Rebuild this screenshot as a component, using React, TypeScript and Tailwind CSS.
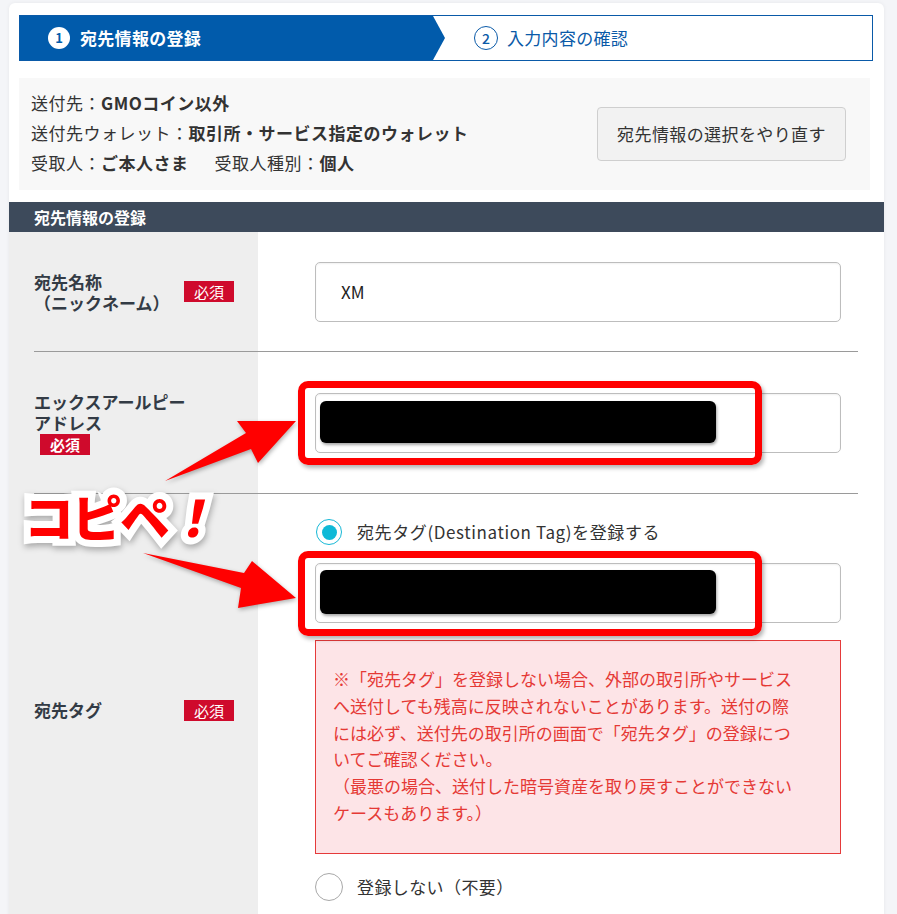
const font = '"Noto Sans CJK JP", "Noto Sans", sans-serif';

function Badge({ className = "" }: { className?: string }) {
  return (
    <span
      className={`inline-flex h-[21px] w-[50px] items-center justify-center bg-[#cf0a2c] text-[15px] leading-none text-white ${className}`}
    >
      必須
    </span>
  );
}

function Radio({ checked }: { checked?: boolean }) {
  if (checked) {
    return (
      <span className="flex h-[26px] w-[26px] shrink-0 items-center justify-center rounded-full border-[1.5px] border-[#16b8d6] bg-white">
        <span className="h-[15px] w-[15px] rounded-full bg-[#0fb9d7]" />
      </span>
    );
  }
  return <span className="h-[28px] w-[28px] shrink-0 rounded-full border-[1.5px] border-[#a8a8a8] bg-white" />;
}

function TextInput({ value }: { value?: string }) {
  return (
    <div className="flex h-[60px] w-[526px] items-center rounded-[5px] border border-[#bdbdbd] bg-white px-[25px] text-[17px] text-[#222] shadow-[inset_0_1px_2px_rgba(0,0,0,0.06)]">
      {value}
    </div>
  );
}

function Stepper() {
  return (
    <div className="mx-[10px] flex h-[46px] w-[854px] border border-[#0a5aa8] bg-white">
      <div className="flex h-full w-[425px] items-center gap-[10px] bg-[#015bab] pl-[28px] [clip-path:polygon(0_0,calc(100%-12px)_0,100%_50%,calc(100%-12px)_100%,0_100%)]">
        <span className="flex h-[22px] w-[22px] items-center justify-center rounded-full bg-white text-[13px] font-bold text-[#015bab]">
          1
        </span>
        <span className="text-[17px] font-bold tracking-[0.3px] text-white">宛先情報の登録</span>
      </div>
      <div className="flex items-center gap-[9px] pl-[29px]">
        <span className="flex h-[24px] w-[24px] items-center justify-center rounded-full border-[1.5px] border-[#0a5aa8] text-[14px] font-medium text-[#0a5aa8]">
          2
        </span>
        <span className="text-[17px] tracking-[0.3px] text-[#0a5aa8]">入力内容の確認</span>
      </div>
    </div>
  );
}

function Summary() {
  return (
    <div className="mx-[10px] mt-[17px] flex h-[112px] w-[851px] items-center justify-between bg-[#f8f8f8] pl-[12px] pr-[24px] text-[17px] leading-[30px] tracking-[0.5px] text-[#333]">
      <div className="-mt-[2px]">
        <div>
          送付先：<b className="font-bold">GMOコイン以外</b>
        </div>
        <div>
          送付先ウォレット：<b className="font-bold">取引所・サービス指定のウォレット</b>
        </div>
        <div className="flex gap-[26px]">
          <span>
            受取人：<b className="font-bold">ご本人さま</b>
          </span>
          <span>
            受取人種別：<b className="font-bold">個人</b>
          </span>
        </div>
      </div>
      <button className="h-[54px] w-[249px] rounded-[4px] border border-[#cfcfcf] bg-[#f2f2f2] text-[17px] tracking-[0.4px] text-[#333]">
        宛先情報の選択をやり直す
      </button>
    </div>
  );
}

function Form() {
  return (
    <div className="bg-[linear-gradient(90deg,#eeeeee_249px,#ffffff_249px)] pl-[25px] pr-[26px]">
      {/* 宛先名称 */}
      <div className="flex h-[120px] items-center border-b border-[#9a9a9a]">
        <div className="flex w-[224px] items-center">
          <div className="w-[150px] text-[17px] font-bold leading-[21px] text-[#333b45]">
            <div>宛先名称</div>
            <div>（ニックネーム）</div>
          </div>
          <Badge />
        </div>
        <div className="pl-[57px]">
          <TextInput value="XM" />
        </div>
      </div>
      {/* アドレス */}
      <div className="flex h-[142px] items-center border-b border-[#9a9a9a]">
        <div className="w-[224px] text-[17px] font-bold leading-[21px] text-[#333b45]">
          <div>エックスアールピー</div>
          <div>アドレス</div>
          <Badge className="ml-[6px]" />
        </div>
        <div className="pl-[57px]">
          <TextInput />
        </div>
      </div>
      {/* 宛先タグ */}
      <div className="flex items-center pb-[24px] pt-[25px]">
        <div className="flex w-[224px] items-center">
          <div className="w-[150px] text-[17px] font-bold text-[#333b45]">宛先タグ</div>
          <Badge />
        </div>
        <div className="pl-[57px]">
          <label className="flex h-[26px] items-center gap-[15px] pl-[1px] text-[17px] tracking-[0.6px] text-[#333]">
            <Radio checked />
            宛先タグ(Destination Tag)を登録する
          </label>
          <div className="mt-[18px]">
            <TextInput />
          </div>
          <div className="mt-[17px] h-[214px] w-[526px] border border-[#e53a3a] bg-[#fde4e7] pl-[17px] pt-[25px] text-[17px] leading-[26.8px] text-[#e53935]">
            <div className="whitespace-nowrap">※「宛先タグ」を登録しない場合、外部の取引所やサービス</div>
            <div className="whitespace-nowrap">へ送付しても残高に反映されないことがあります。送付の際</div>
            <div className="whitespace-nowrap">には必ず、送付先の取引所の画面で「宛先タグ」の登録につ</div>
            <div className="whitespace-nowrap">いてご確認ください。</div>
            <div className="whitespace-nowrap">（最悪の場合、送付した暗号資産を取り戻すことができない</div>
            <div className="whitespace-nowrap">ケースもあります。）</div>
          </div>
          <label className="mt-[19px] flex h-[28px] items-center gap-[14px] text-[17px] tracking-[0.4px] text-[#333]">
            <Radio />
            登録しない（不要）
          </label>
        </div>
      </div>
    </div>
  );
}

function Annotations() {
  return (
    <>
      {/* redaction boxes */}
      <div className="absolute left-[320px] top-[401px] h-[42px] w-[396px] rounded-[6px] bg-black shadow-[1px_2px_3px_rgba(0,0,0,0.35)]" />
      <div className="absolute left-[320px] top-[570px] h-[44px] w-[396px] rounded-[6px] bg-black shadow-[1px_2px_3px_rgba(0,0,0,0.35)]" />
      {/* red highlight frames */}
      <div className="absolute left-[298px] top-[381px] h-[84px] w-[464px] rounded-[10px] border-[7px] border-[#ff0000] shadow-[2px_3px_4px_rgba(0,0,0,0.3)]" />
      <div className="absolute left-[298px] top-[551px] h-[85px] w-[464px] rounded-[10px] border-[7px] border-[#ff0000] shadow-[2px_3px_4px_rgba(0,0,0,0.3)]" />
      {/* arrows */}
      <svg
        className="pointer-events-none absolute left-0 top-0 drop-shadow-[1px_2px_2px_rgba(0,0,0,0.3)]"
        width="897"
        height="914"
        viewBox="0 0 897 914"
      >
        <polygon points="165,481 246,433 237,421 296,421 258,463 251,449" fill="#ff0000" />
        <polygon points="143,553 244,573 252,561 296,598 238,608 241,588" fill="#ff0000" />
      </svg>
      {/* コピペ！ */}
      <div
        className="pointer-events-none absolute left-[24px] top-[484px] flex items-center text-[50px] font-black leading-[62px] tracking-[-2px] text-[#ff0000] [-webkit-text-stroke:14px_#ffffff] [paint-order:stroke_fill] drop-shadow-[1px_3px_3px_rgba(0,0,0,0.3)]"
        style={{ fontFamily: font }}
      >
        <span>コピペ</span>
        <span className="ml-[4px] inline-block -skew-x-12">！</span>
      </div>
    </>
  );
}

export default function App() {
  return (
    <div className="relative min-h-[914px] w-[897px] overflow-hidden bg-[#f4f5f8]" style={{ fontFamily: font }}>
      <div className="ml-[9px] mt-[3px] w-[875px] rounded-t-[6px] bg-white pt-[12px] shadow-[0_0_4px_rgba(0,0,0,0.06)]">
        <Stepper />
        <Summary />
        <div className="mt-[12px] flex h-[30px] items-center bg-[#3d4a5b] pl-[25px] text-[16px] font-bold text-white">
          宛先情報の登録
        </div>
        <Form />
      </div>
      <Annotations />
    </div>
  );
}
